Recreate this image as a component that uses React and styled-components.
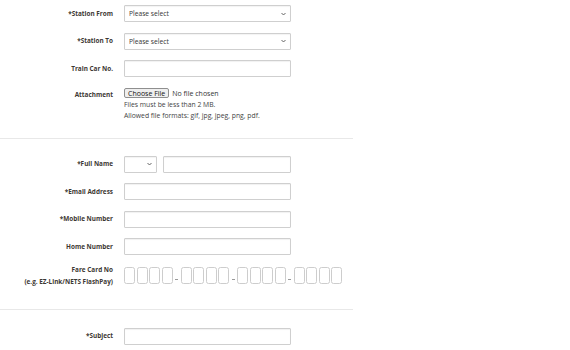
import React from "react";
import styled, { createGlobalStyle } from "styled-components";

const GlobalStyle = createGlobalStyle`
  body {
    margin: 0;
    background: #fff;
    font-family: "Open Sans", "Liberation Sans", sans-serif;
  }
`;

const Page = styled.div`
  width: 353px;
`;

const Section = styled.div`
  display: flex;
  flex-direction: column;
  gap: 10.5px;
  padding: ${(p) => p.$pad || "18px 0 18px 0"};
`;

const Divider = styled.div`
  height: 1px;
  background: #e8e8e8;
`;

const Row = styled.div`
  display: flex;
  align-items: ${(p) => (p.$top ? "flex-start" : "center")};
`;

const Label = styled.label`
  width: 113px;
  margin-right: 11px;
  flex-shrink: 0;
  text-align: right;
  font-size: 6.4px;
  font-weight: 700;
  color: #3d3833;
  line-height: ${(p) => p.$lh || "10px"};
  margin-top: ${(p) => p.$mt || "0"};
`;

const TextInput = styled.input`
  display: block;
  box-sizing: border-box;
  width: ${(p) => p.$w || "167px"};
  height: 17px;
  border: 1px solid #cfcfcf;
  border-radius: 1px;
  box-shadow: inset 0 1px 1px rgba(0, 0, 0, 0.06);
  padding: 0 4px;
  font-size: 7px;
  font-family: inherit;
  background: #fff;
  outline: none;
`;

const SelectWrap = styled.div`
  position: relative;
  width: ${(p) => p.$w || "167px"};
  height: 17px;
`;

const Select = styled.select`
  display: block;
  box-sizing: border-box;
  appearance: none;
  width: 100%;
  height: 17px;
  margin: 0;
  border: 1px solid #cfcfcf;
  border-radius: 1px;
  box-shadow: inset 0 1px 1px rgba(0, 0, 0, 0.05);
  padding: 0 12px 0 4px;
  font-size: 6.7px;
  font-family: inherit;
  color: #333;
  background: #fff;
  outline: none;
`;

const Chevron = styled.svg`
  position: absolute;
  right: 5px;
  top: 6.5px;
  width: 5px;
  height: 4px;
  pointer-events: none;
`;

const Fields = styled.div`
  display: flex;
  align-items: center;
  gap: 6px;
`;

const FileBlock = styled.div`
  display: flex;
  flex-direction: column;
`;

const FileInput = styled.input`
  font-size: 7px;
  font-family: inherit;
  color: #333;
  height: 10px;
  margin: 0 0 1px 0;

  &::file-selector-button {
    font-size: 7px;
    font-family: inherit;
    padding: 0 3px;
    height: 10px;
    margin-right: 3px;
    border: 1px solid #8f8f8f;
    border-radius: 2px;
    background: #efefef;
    color: #111;
  }
`;

const Note = styled.div`
  font-size: 6.8px;
  line-height: 11px;
  color: #444;
`;

const CardRow = styled.div`
  display: flex;
  align-items: flex-end;
  margin-top: 1px;
`;

const Group = styled.div`
  display: flex;
  gap: 1.5px;
`;

const Box = styled.input`
  box-sizing: border-box;
  width: 11px;
  height: 17px;
  padding: 0;
  border: 1px solid #cdcdcd;
  border-radius: 2.5px;
  background: #fff;
  outline: none;
`;

const Dash = styled.span`
  display: flex;
  justify-content: center;
  width: 8px;
  padding-bottom: 4px;

  &::after {
    content: "";
    width: 3px;
    height: 1px;
    background: #9a9a9a;
  }
`;

function ChevronIcon() {
  return (
    <Chevron viewBox="0 0 10 7">
      <path d="M1 1.5 L5 5.5 L9 1.5" fill="none" stroke="#555" strokeWidth="1.8" />
    </Chevron>
  );
}

function SelectField({ width, placeholder }) {
  return (
    <SelectWrap $w={width}>
      <Select defaultValue="">
        <option value="">{placeholder}</option>
      </Select>
      <ChevronIcon />
    </SelectWrap>
  );
}

function FareCard() {
  const groups = [0, 1, 2, 3];
  return (
    <CardRow>
      {groups.map((g) => (
        <React.Fragment key={g}>
          {g > 0 && <Dash />}
          <Group>
            {[0, 1, 2, 3].map((b) => (
              <Box key={b} maxLength={1} />
            ))}
          </Group>
        </React.Fragment>
      ))}
    </CardRow>
  );
}

export default function App() {
  return (
    <Page>
      <GlobalStyle />
      <Section $pad="5px 0 17px 0">
        <Row>
          <Label>*Station From</Label>
          <SelectField placeholder="Please select" />
        </Row>
        <Row>
          <Label>*Station To</Label>
          <SelectField placeholder="Please select" />
        </Row>
        <Row>
          <Label>Train Car No.</Label>
          <TextInput />
        </Row>
        <Row $top>
          <Label $mt="2px">Attachment</Label>
          <FileBlock>
            <FileInput type="file" />
            <Note>Files must be less than 2 MB.</Note>
            <Note>Allowed file formats: gif, jpg, jpeg, png, pdf.</Note>
          </FileBlock>
        </Row>
      </Section>
      <Divider />
      <Section $pad="17px 0 20px 0">
        <Row>
          <Label>*Full Name</Label>
          <Fields>
            <SelectField width="33px" placeholder="" />
            <TextInput $w="128px" />
          </Fields>
        </Row>
        <Row>
          <Label>*Email Address</Label>
          <TextInput />
        </Row>
        <Row>
          <Label>*Mobile Number</Label>
          <TextInput />
        </Row>
        <Row>
          <Label>Home Number</Label>
          <TextInput />
        </Row>
        <Row $top>
          <Label $lh="12.5px" $mt="-2px">
            Fare Card No
            <br />
            (e.g. EZ-Link/NETS FlashPay)
          </Label>
          <FareCard />
        </Row>
      </Section>
      <Divider />
      <Section $pad="18px 0 18px 0">
        <Row>
          <Label>*Subject</Label>
          <TextInput />
        </Row>
      </Section>
    </Page>
  );
}
